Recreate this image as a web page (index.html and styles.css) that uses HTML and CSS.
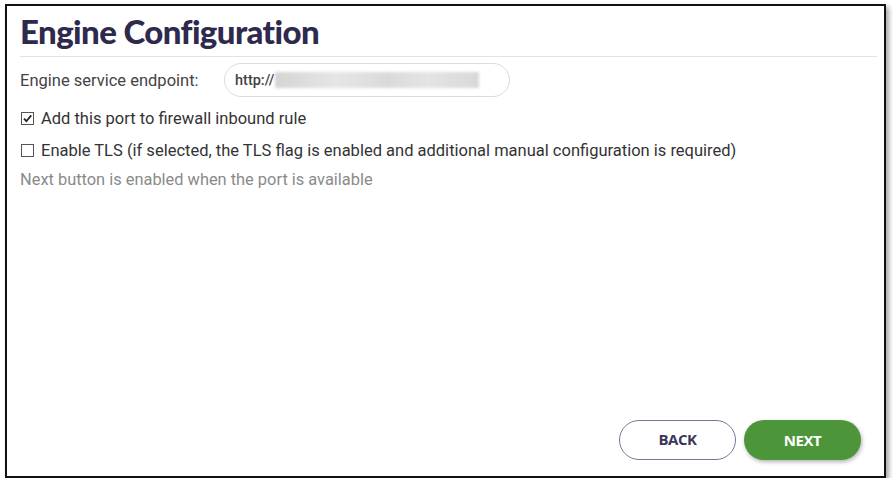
FILE: index.html
```html
<!DOCTYPE html>
<html>
<head>
    <meta charset="UTF-8">
    <title>Engine Configuration</title>
    <link rel="stylesheet" href="styles.css">
</head>
<body>

<div class="frame">
    <h1 class="title">Engine Configuration</h1>
    <div class="content">
        <div class="field">
            <label class="field-label">Engine service endpoint:</label>
            <div class="pill">
                <span class="pill-text">http://</span>
                <span class="blur"></span>
            </div>
        </div>
        <div class="check-row">
            <span class="box on">
                <svg width="11" height="11" viewBox="0 0 11 11"><path d="M2 5.6 L4.4 8.2 L9.2 2.4" fill="none" stroke="#222" stroke-width="1.8"/></svg>
            </span>
            <span>Add this port to firewall inbound rule</span>
        </div>
        <div class="check-row">
            <span class="box"></span>
            <span>Enable TLS (if selected, the TLS flag is enabled and additional manual configuration is required)</span>
        </div>
        <div class="hint">Next button is enabled when the port is available</div>
    </div>
    <div class="actions">
        <a href="javascript:;" class="btn back">BACK</a>
        <a href="javascript:;" class="btn next">NEXT</a>
    </div>
</div>
</body>
</html>
```

FILE: styles.css
```css
body,div,h1{margin:0;padding:0;}
body {
    background: #fff;
    font-family: Roboto, "Liberation Sans", sans-serif;
}
.frame {
    width: 857px;
    height: 470px;
    margin: 4px 0 0 5px;
    border: 2px solid #111;
    box-shadow: 3px 3px 5px rgba(0,0,0,0.35);
    display: flex;
    flex-direction: column;
    padding: 0 7px 0 13px;
}
.title {
    font-family: Lato, "Open Sans", sans-serif;
    font-weight: 900;
    font-size: 33px;
    color: #2e2a4e;
    line-height: 40px;
    padding: 5px 0 0 0;
    height: 45px;
    border-bottom: 1px solid #e3e3e3;
    letter-spacing: -0.6px;
}
.content {
    flex: 1;
    font-size: 16.5px;
    color: #333;
}
.field {
    display: flex;
    align-items: center;
    height: 36px;
    margin-top: 5px;
}
.field-label {
    width: 204px;
    color: #444;
}
.pill {
    width: 274px;
    height: 32px;
    border: 1px solid #dcdcdc;
    border-radius: 18px;
    display: flex;
    align-items: center;
    padding-left: 10px;
}
.pill-text {
    font-size: 14.5px;
    font-weight: 500;
    color: #444;
}
.blur {
    width: 204px;
    height: 16px;
    margin-left: 1px;
    background: linear-gradient(90deg, #d4d4d4, #e6e6e6 30%, #dadada 55%, #e4e4e4 75%, #d8d8d8);
    filter: blur(1.5px);
}
.check-row {
    display: flex;
    align-items: center;
    height: 20px;
    margin-top: 10px;
    color: #333;
}
.check-row + .check-row {
    margin-top: 12px;
}
.box {
    width: 11px;
    height: 11px;
    border: 1px solid #555;
    margin: 0 7px 0 1px;
    display: flex;
    align-items: center;
    justify-content: center;
}
.hint {
    margin-top: 10px;
    font-size: 16.4px;
    color: #8a8a8a;
}
.actions {
    display: flex;
    justify-content: flex-end;
    gap: 8px;
    padding: 0 16px 16px 0;
}
.btn {
    width: 117px;
    height: 40px;
    line-height: 40px;
    border-radius: 21px;
    text-align: center;
    text-decoration: none;
    font-family: "Open Sans", sans-serif;
    font-weight: 700;
    font-size: 15px;
    letter-spacing: -0.5px;
    box-sizing: border-box;
}
.back {
    border: 1.5px solid #7a7794;
    color: #3b3758;
    line-height: 37px;
}
.next {
    background: #4d953a;
    color: #fff;
    box-shadow: 1px 2px 4px rgba(0,0,0,0.3);
}
```
